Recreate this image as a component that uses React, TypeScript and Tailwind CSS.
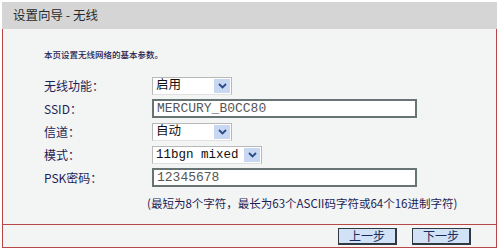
import { ReactNode } from "react";

const cjk = "font-['Noto_Sans_CJK_SC',sans-serif]";
const mono = "font-['Liberation_Mono','Noto_Sans_CJK_SC',monospace]";

function Chevron() {
  return (
    <svg width="9" height="6" viewBox="0 0 9 6">
      <path d="M1 1 L4.5 4.5 L8 1" fill="none" stroke="#2a4a8a" strokeWidth="1.8" />
    </svg>
  );
}

function Select({ value, width }: { value: string; width: string }) {
  return (
    <div className={`flex h-[18px] items-stretch border border-[#b8b8b8] border-b-[#e0e0e0] bg-white ${width}`}>
      <div className={`flex-1 pl-[3px] leading-[16px] text-[12.5px] text-[#111] ${mono}`}>{value}</div>
      <div className="my-[1px] mr-[1px] flex w-[16px] items-center justify-center bg-[#c8d8f2]">
        <Chevron />
      </div>
    </div>
  );
}

function Field({ value }: { value: string }) {
  return (
    <div
      className={`h-[19px] w-[265px] border-2 border-[#687474] bg-white pl-[3px] leading-[15px] text-[13px] text-[#555] ${mono}`}
    >
      {value}
    </div>
  );
}

function Row({ label, children }: { label: string; children: ReactNode }) {
  return (
    <div className="flex h-[23px] items-center">
      <div className={`w-[108px] text-[12px] text-[#1e1e55] ${cjk}`}>{label}</div>
      {children}
    </div>
  );
}

function StepButton({ text }: { text: string }) {
  return (
    <button
      className={`h-[17px] w-[59px] border border-[#303840] border-b-2 border-r-2 bg-[#d2e2f6] text-[12px] leading-[13px] text-[#1a2a5a] ${cjk}`}
    >
      {text}
    </button>
  );
}

export default function App() {
  return (
    <div className="h-[250px] w-[500px] bg-white px-[2px] pt-[2px]">
      <div className="flex h-[27px] w-[495px] items-center bg-[#d5d5d5] pl-[11px]">
        <span className={`whitespace-pre text-[12.5px] text-[#2a2a2a] ${cjk}`}>设置向导 - 无线</span>
      </div>
      <div className="w-[495px] border-x-[1.5px] border-b-[1.5px] border-[#b84848] bg-[#f3f4f4]">
        <div className="h-[195px] pl-[41px] pt-[18px]">
          <div className={`h-[14px] text-[8.5px] font-medium leading-[14px] text-[#1e1e55] ${cjk}`}>
            本页设置无线网络的基本参数。
          </div>
          <div className="mt-[13px] flex flex-col">
            <Row label="无线功能：">
              <Select value="启用" width="w-[80px]" />
            </Row>
            <Row label="SSID：">
              <Field value="MERCURY_B0CC80" />
            </Row>
            <Row label="信道：">
              <Select value="自动" width="w-[80px]" />
            </Row>
            <Row label="模式：">
              <Select value="11bgn mixed" width="w-[110px]" />
            </Row>
            <Row label="PSK密码：">
              <Field value="12345678" />
            </Row>
          </div>
          <div className={`mt-[6px] pl-[103px] text-[11.5px] leading-[16px] text-[#1e1e55] ${cjk}`}>
            (最短为8个字符，最长为63个ASCII码字符或64个16进制字符)
          </div>
        </div>
        <div className="flex h-[23px] items-center justify-end gap-[15px] border-t-[1.5px] border-[#b84848] pr-[25px]">
          <StepButton text="上一步" />
          <StepButton text="下一步" />
        </div>
      </div>
    </div>
  );
}
